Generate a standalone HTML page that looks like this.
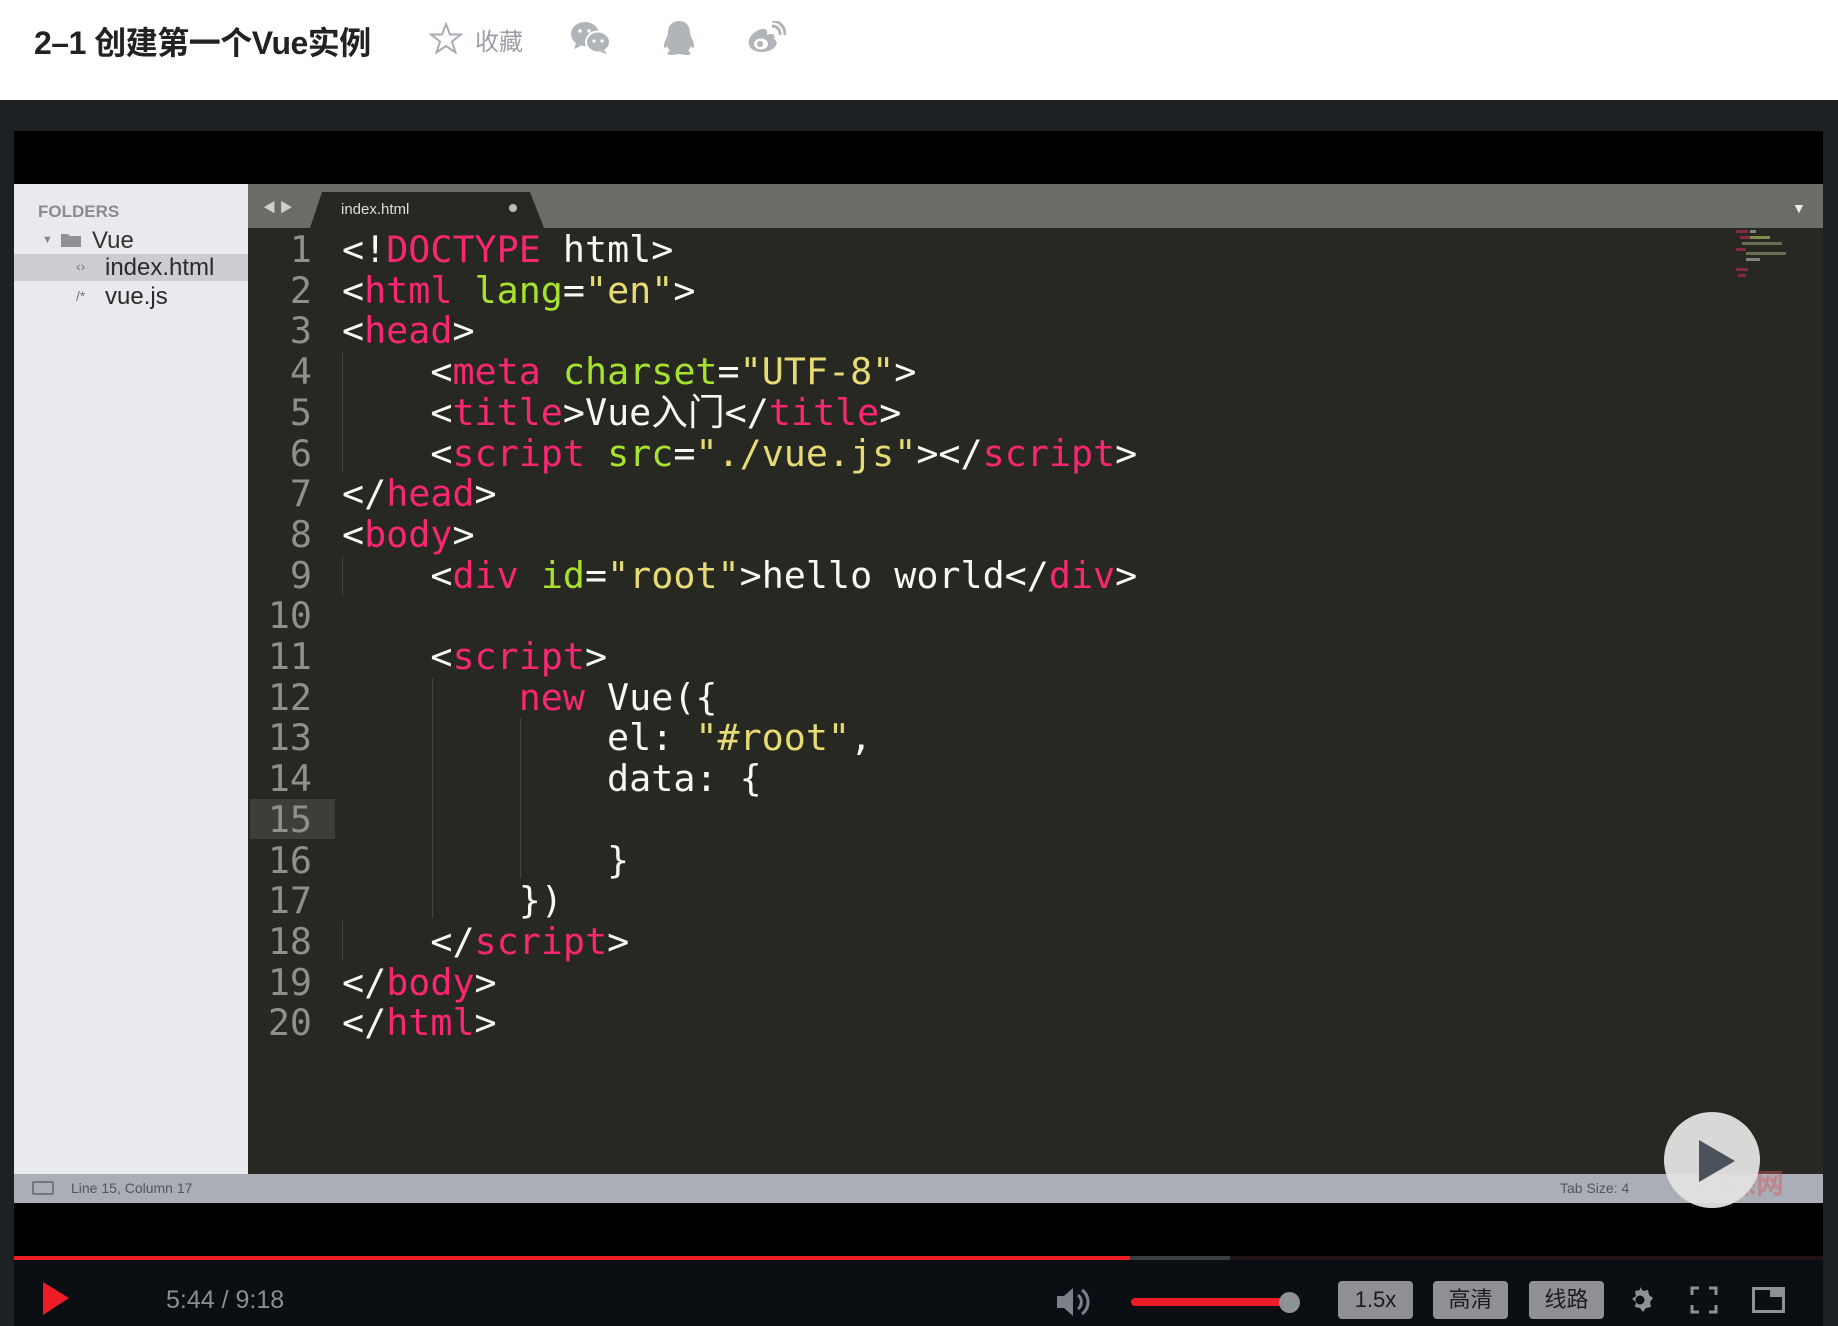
<!DOCTYPE html>
<html><head><meta charset="utf-8">
<style>
*{margin:0;padding:0;box-sizing:border-box}
body{width:1838px;height:1326px;position:relative;background:#1e2124;overflow:hidden;font-family:"Liberation Sans","Noto Sans CJK SC",sans-serif}
.a{position:absolute}
#hdr{left:0;top:0;width:1838px;height:100px;background:#fff}
.code{font-family:"DejaVu Sans Mono","Liberation Mono",monospace;font-size:36.7px;line-height:40.7px;white-space:pre;color:#f8f8f2}
.p{color:#f92672}.g{color:#a6e22e}.y{color:#e6db74}
.ln{color:#8f908a;text-align:right;width:62px}
.btn{top:1281px;width:75px;height:38px;background:#8e9094;border-radius:4px;color:#1a1c1f;font-size:22px;text-align:center;line-height:38px}
</style></head><body>
<div id="hdr" class="a"></div>
<div class="a" style="left:34px;top:18px;font-size:32px;font-weight:bold;color:#222;letter-spacing:-0.5px">2–1 创建第一个Vue实例</div>
<svg class="a" style="left:429px;top:22px" width="34" height="32" viewBox="0 0 34 32"><path d="M17 2l4 10.5h11l-9 7 3.5 11L17 24l-9.5 6.5 3.5-11-9-7h11z" fill="none" stroke="#a9adb3" stroke-width="2"/></svg>
<div class="a" style="left:475px;top:22px;font-size:24px;color:#9a9ea5">收藏</div>
<svg class="a" style="left:570px;top:21px" width="42" height="34" viewBox="0 0 42 34"><ellipse cx="15" cy="13" rx="14" ry="12" fill="#b1b4b9"/><ellipse cx="28" cy="21" rx="12" ry="10.5" fill="#b1b4b9" stroke="#fff" stroke-width="2"/><circle cx="10" cy="10" r="1.8" fill="#fff"/><circle cx="19" cy="10" r="1.8" fill="#fff"/><circle cx="24" cy="20" r="1.6" fill="#fff"/><circle cx="32" cy="20" r="1.6" fill="#fff"/><path d="M6 22l-2 6 7-3z" fill="#b1b4b9"/><path d="M34 29l3 4-7-2z" fill="#b1b4b9"/></svg>
<svg class="a" style="left:662px;top:20px" width="34" height="36" viewBox="0 0 34 36"><path d="M17 1c-8 0-11 6-11 12 0 3-4 8-4 13 0 3 2 2 3 0 1 3 3 5 3 5-3 1-4 4 1 4 3 0 6-1 8-1s5 1 8 1c5 0 4-3 1-4 0 0 2-2 3-5 1 2 3 3 3 0 0-5-4-10-4-13 0-6-3-12-11-12z" fill="#b1b4b9"/></svg>
<svg class="a" style="left:746px;top:21px" width="40" height="34" viewBox="0 0 40 34"><path d="M16 8C7 10 1 18 3 24c2 7 14 9 22 5 7-4 7-9 3-11 2-5-2-6-7-4 1-4-1-7-5-6z" fill="#b1b4b9"/><ellipse cx="15" cy="23" rx="7" ry="5.5" fill="#fff"/><circle cx="14" cy="23" r="3" fill="#b1b4b9"/><path d="M26 5a8 8 0 0 1 8 9M26 0a13 13 0 0 1 13 14" fill="none" stroke="#b1b4b9" stroke-width="3"/></svg>

<!-- video -->
<div class="a" style="left:14px;top:131px;width:1809px;height:1195px;background:#000"></div>
<div class="a" style="left:14px;top:184px;width:234px;height:990px;background:#e9eaee"></div>
<div class="a" style="left:38px;top:202px;font-size:17px;font-weight:bold;color:#8a8c90">FOLDERS</div>
<div class="a" style="left:42px;top:234px;font-size:11px;color:#888">▼</div>
<svg class="a" style="left:60px;top:231px" width="22" height="17"><path d="M1 3h7l2 2h11v11H1z" fill="#8f9196"/></svg>
<div class="a" style="left:92px;top:227px;font-size:24px;color:#333">Vue</div>
<div class="a" style="left:14px;top:254px;width:234px;height:27px;background:#cbcdd3"></div>
<div class="a" style="left:76px;top:258px;font-size:14px;color:#777">‹›</div>
<div class="a" style="left:105px;top:254px;font-size:24px;color:#2a2a2a">index.html</div>
<div class="a" style="left:76px;top:288px;font-size:14px;color:#777">/*</div>
<div class="a" style="left:105px;top:283px;font-size:24px;color:#2a2a2a">vue.js</div>

<div class="a" style="left:248px;top:184px;width:1575px;height:44px;background:#6c6c67"></div>
<div class="a" style="left:263px;top:197px;font-size:13px;color:#cfcfcf">◀ ▶</div>
<svg class="a" style="left:310px;top:190px" width="245" height="38"><path d="M0 38L12 2h208l14 36z" fill="#272822"/></svg>
<div class="a" style="left:341px;top:201px;font-size:15px;color:#ddd">index.html</div>
<div class="a" style="left:509px;top:204px;width:8px;height:8px;border-radius:50%;background:#bbb"></div>
<div class="a" style="left:1792px;top:200px;font-size:14px;color:#eee">▼</div>
<div class="a" style="left:248px;top:228px;width:1575px;height:946px;background:#272822"></div>
<div class="a" style="left:250px;top:799px;width:85px;height:40px;background:#3e3d38"></div>
<div class="a" style="left:342px;top:556px;width:1px;height:40px;background:#444"></div>
<div class="a" style="left:432px;top:678px;width:1px;height:240px;background:#444"></div>
<div class="a" style="left:520px;top:718px;width:1px;height:160px;background:#444"></div>
<div class="a" style="left:342px;top:353px;width:1px;height:120px;background:#444"></div>
<div class="a" style="left:342px;top:921px;width:1px;height:40px;background:#444"></div>
<svg class="a" style="left:1734px;top:228px" width="56" height="52"><g opacity=".7"><rect x="2" y="2" width="12" height="3" fill="#b0284f"/><rect x="16" y="2" width="6" height="3" fill="#aaa"/><rect x="6" y="8" width="10" height="3" fill="#b0284f"/><rect x="16" y="8" width="20" height="3" fill="#a6b85a"/><rect x="8" y="14" width="40" height="3" fill="#8a8a6a"/><rect x="2" y="20" width="10" height="3" fill="#b0284f"/><rect x="12" y="24" width="40" height="3" fill="#8a8a6a"/><rect x="12" y="30" width="14" height="3" fill="#aaa"/><rect x="2" y="40" width="12" height="3" fill="#b0284f"/><rect x="4" y="46" width="8" height="3" fill="#b0284f"/></g></svg>

<div class="a code ln" style="left:250px;top:230px">1
2
3
4
5
6
7
8
9
10
11
12
13
14
15
16
17
18
19
20</div>
<div class="a code" style="left:342px;top:230px">&lt;!<span class="p">DOCTYPE</span> html&gt;
&lt;<span class="p">html</span> <span class="g">lang</span>=<span class="y">"en"</span>&gt;
&lt;<span class="p">head</span>&gt;
    &lt;<span class="p">meta</span> <span class="g">charset</span>=<span class="y">"UTF-8"</span>&gt;
    &lt;<span class="p">title</span>&gt;Vue入门&lt;/<span class="p">title</span>&gt;
    &lt;<span class="p">script</span> <span class="g">src</span>=<span class="y">"./vue.js"</span>&gt;&lt;/<span class="p">script</span>&gt;
&lt;/<span class="p">head</span>&gt;
&lt;<span class="p">body</span>&gt;
    &lt;<span class="p">div</span> <span class="g">id</span>=<span class="y">"root"</span>&gt;hello world&lt;/<span class="p">div</span>&gt;

    &lt;<span class="p">script</span>&gt;
        <span class="p">new</span> Vue({
            el: <span class="y">"#root"</span>,
            data: {

            }
        })
    &lt;/<span class="p">script</span>&gt;
&lt;/<span class="p">body</span>&gt;
&lt;/<span class="p">html</span>&gt;</div>

<div class="a" style="left:14px;top:1174px;width:1809px;height:29px;background:#aaaeb6"></div>
<div class="a" style="left:32px;top:1181px;width:22px;height:14px;border:2px solid #777;border-radius:2px"></div>
<div class="a" style="left:71px;top:1180px;font-size:14px;color:#555">Line 15, Column 17</div>
<div class="a" style="left:1560px;top:1180px;font-size:14px;color:#555">Tab Size: 4</div>
<div class="a" style="left:1700px;top:1162px;font-size:28px;color:#d45a5a;opacity:.45;font-weight:bold">慕课网</div>
<div class="a" style="left:1664px;top:1112px;width:96px;height:96px;border-radius:50%;background:rgba(225,225,225,.95)"></div>
<svg class="a" style="left:1697px;top:1138px" width="40" height="46"><path d="M2 2L38 23 2 44z" fill="#4a525b"/></svg>

<!-- progress -->
<div class="a" style="left:14px;top:1256px;width:1809px;height:4px;background:#1e1418"></div>
<div class="a" style="left:14px;top:1256px;width:1116px;height:4px;background:#ee1c25"></div>
<div class="a" style="left:1130px;top:1256px;width:100px;height:4px;background:#3b3f44"></div>
<div class="a" style="left:14px;top:1260px;width:1809px;height:66px;background:#0b0e12"></div>
<svg class="a" style="left:43px;top:1282px" width="26" height="33"><path d="M0 0L26 16 0 33z" fill="#ee1c25"/></svg>
<div class="a" style="left:166px;top:1286px;font-size:25px;color:#8a8d92">5:44 / 9:18</div>
<svg class="a" style="left:1056px;top:1287px" width="34" height="30"><path d="M1 9h7l9-8v28l-9-8H1z" fill="#7d8187"/><path d="M22 8a9 9 0 0 1 0 14M26 3a15 15 0 0 1 0 24" fill="none" stroke="#7d8187" stroke-width="3"/></svg>
<div class="a" style="left:1131px;top:1298px;width:158px;height:8px;border-radius:4px;background:#ee1c25"></div>
<div class="a" style="left:1279px;top:1292px;width:21px;height:21px;border-radius:50%;background:#8e9196"></div>
<div class="a btn" style="left:1338px">1.5x</div>
<div class="a btn" style="left:1433px">高清</div>
<div class="a btn" style="left:1529px">线路</div>
<svg class="a" style="left:1625px;top:1285px" width="30" height="30" viewBox="0 0 30 30"><path d="M15 2l3 4 5-1 1 5 4 3-3 4 1 5-5 1-3 4-3-4-5-1 1-5-4-3 4-3-1-5 5-1z" fill="#8e9196"/><circle cx="15" cy="15" r="4.5" fill="#0b0e12"/></svg>
<svg class="a" style="left:1690px;top:1286px" width="28" height="28"><path d="M2 9V2h7M19 2h7v7M26 19v7h-7M9 26H2v-7" fill="none" stroke="#8e9196" stroke-width="3"/></svg>
<svg class="a" style="left:1752px;top:1287px" width="33" height="26"><rect x="1.5" y="1.5" width="30" height="23" fill="none" stroke="#8e9196" stroke-width="3"/><rect x="18" y="1" width="14" height="9" fill="#8e9196"/></svg>
</body></html>
